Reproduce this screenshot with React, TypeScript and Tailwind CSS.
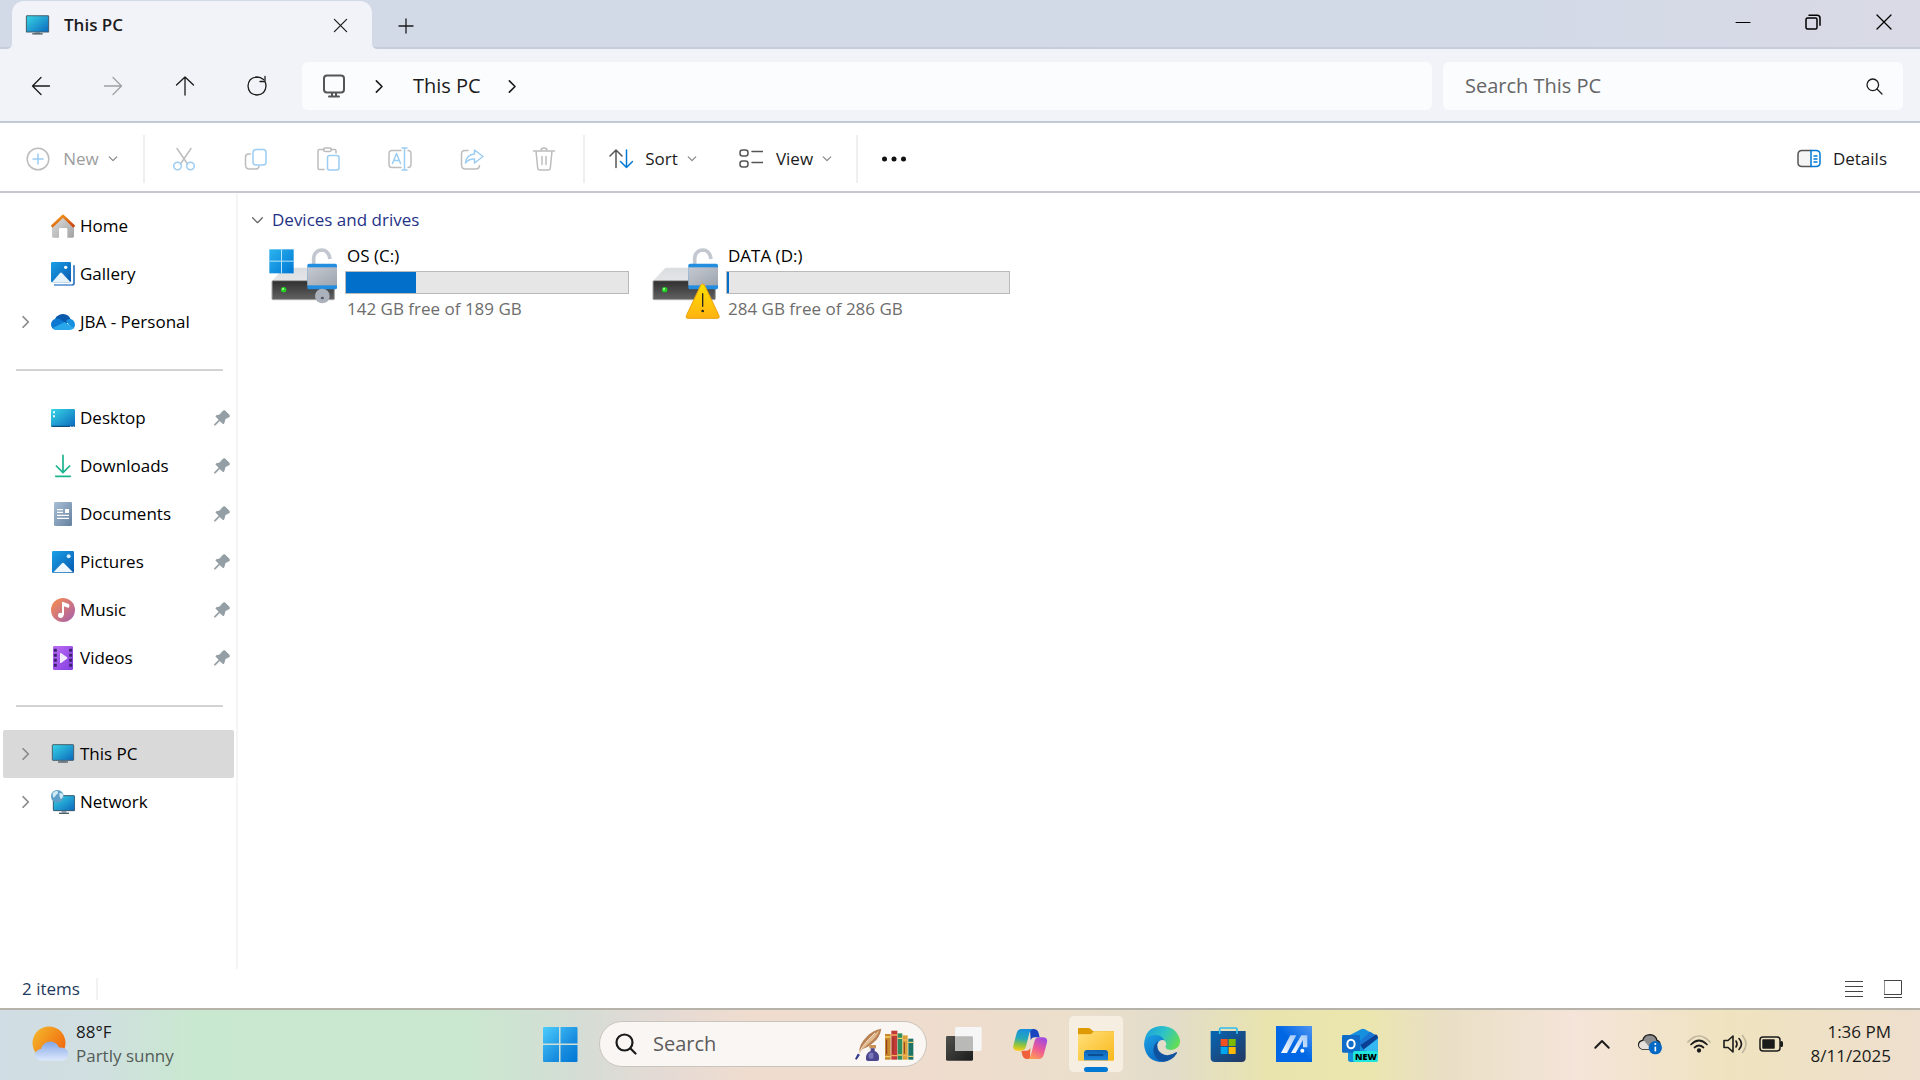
import type { ReactNode } from "react";

interface IconProps {
  className?: string;
}

const GRAY = "#bdbdbd";
const SKY = "#9ccdf2";

function Stroke({ className = "size-6", color = "#1b1b1b", width = 1.5, box = "0 0 24 24", children }: {
  className?: string;
  color?: string;
  width?: number;
  box?: string;
  children: ReactNode;
}) {
  return (
    <svg viewBox={box} className={className} fill="none" stroke={color} strokeWidth={width} strokeLinecap="round" strokeLinejoin="round" aria-hidden="true">
      {children}
    </svg>
  );
}

const Chevron = ({ className = "size-3", color = "#8a8a8a", width = 1.5 }: IconProps & { color?: string; width?: number }) => (
  <Stroke className={className} color={color} width={width} box="0 0 12 12">
    <path d="M1.5 3.5 6 8l4.5-4.5" />
  </Stroke>
);

const PinIcon = () => (
  <svg viewBox="641 645 48 48" className="size-4" aria-hidden="true">
    <path
      d="M667 648q5-4 9 0l11 11q4 5-1 8l-10 5q-2 2-2 6l-2 7q-2 4-5 1l-9-8-12 13q-4 2-5-1 0-2 2-4l12-12-8-8q-3-3 1-5l7-2q4 0 6-4z"
      fill="#939ea5"
    />
  </svg>
);

const MonitorIcon = ({ className = "size-6" }: IconProps) => (
  <svg viewBox="153 637 72 72" className={className} aria-hidden="true">
    <defs>
      <linearGradient id="screen" x1="0" y1="0" x2="1" y2="1">
        <stop offset="0" stopColor="#38d6e6" />
        <stop offset="1" stopColor="#0a68bd" />
      </linearGradient>
    </defs>
    <path d="M182 692h14v6h-14z" fill="#9fb0bb" />
    <path d="M174 697h30" stroke="#4f5d66" strokeWidth="4" />
    <rect x="157" y="645" width="64" height="47" rx="2" fill="url(#screen)" stroke="#46616f" strokeWidth="3" />
  </svg>
);

const HomeIcon = () => (
  <svg viewBox="153 58 72 72" className="size-6" aria-hidden="true">
    <defs>
      <linearGradient id="wall" x1="0" y1="0" x2="1" y2="1">
        <stop offset="0" stopColor="#dedede" />
        <stop offset="1" stopColor="#a2a2a2" />
      </linearGradient>
      <linearGradient id="roof" x1="0" y1="0" x2="1" y2="1">
        <stop offset="0" stopColor="#f9a01b" />
        <stop offset="1" stopColor="#c9400a" />
      </linearGradient>
    </defs>
    <path d="M189 66 156 96v29q0 4 4 4h17v-25q0-4 4-4h17q4 0 4 4v25h16q4 0 4-4V96z" fill="url(#wall)" />
    <path d="m155 96 34-32 34 32" fill="none" stroke="url(#roof)" strokeWidth="8" strokeLinejoin="round" />
  </svg>
);

const PictureDefs = () => (
  <defs>
    <linearGradient id="photo" x1="0" y1="0" x2="1" y2="1">
      <stop offset="0" stopColor="#1ba0e8" />
      <stop offset="1" stopColor="#0759ad" />
    </linearGradient>
  </defs>
);

const GalleryIcon = () => (
  <svg viewBox="153 201 72 72" className="size-6" aria-hidden="true">
    <PictureDefs />
    <path d="M222 211v54q0 5-6 5h-54" fill="none" stroke="#2b74c2" strokeWidth="5" />
    <path d="M216 270h-54" stroke="#8ab2e2" strokeWidth="4" />
    <rect x="153" y="201" width="60" height="61" rx="4" fill="url(#photo)" />
    <path d="m157 261 23-27q3-3 6 0l25 27z" fill="#e6f3fc" />
    <circle cx="197" cy="217" r="5" fill="#fff" />
  </svg>
);

const PicturesIcon = () => (
  <svg viewBox="153 60 72 72" className="size-6" aria-hidden="true">
    <PictureDefs />
    <rect x="156" y="63" width="66" height="66" rx="4" fill="url(#photo)" />
    <path d="m160 127 26-27q3-3 6 0l27 27z" fill="#f0f7fd" />
    <circle cx="206" cy="79" r="6" fill="#d5effc" />
  </svg>
);

const OneDriveIcon = () => (
  <svg viewBox="153 345 72 72" className="size-6" aria-hidden="true">
    <path d="M165 371q9-14 25-14 16 1 22 16l-14 14z" fill="#0a59ab" />
    <path d="M153 388q1-14 14-17 10-1 17 4l22 14-30 16h-8q-15-2-15-17z" fill="#0c78d1" />
    <path d="M198 379q4-8 14-7 12 3 13 17 0 9-6 13z" fill="#1590df" />
    <path d="m158 399 36-18 28 18q-5 6-13 6h-41q-6-1-10-6z" fill="#28a8ea" />
  </svg>
);

const DesktopIcon = () => (
  <svg viewBox="153 633 72 72" className="size-6" aria-hidden="true">
    <rect x="153" y="642" width="72" height="54" rx="4" fill="url(#screen)" />
    <path d="M154 692h70v1q0 3-4 3h-62q-4 0-4-3z" fill="#0b4e7c" />
    <path d="M159 649h6v6h-6zM159 661h6v6h-6zM211 693h3v3h-3zM218 693h3v3h-3z" fill="#eafcff" />
  </svg>
);

const DownloadsIcon = () => (
  <Stroke box="153 779 72 72" color="#19b38d" width={5}>
    <path d="M189 783v50M169 815l20 20 20-20" />
    <path d="M167 846h44" />
  </Stroke>
);

const DocumentsIcon = () => (
  <svg viewBox="153 921 72 72" className="size-6" aria-hidden="true">
    <defs>
      <linearGradient id="paper" x1="0" y1="0" x2="1" y2="1">
        <stop offset="0" stopColor="#a9bfd6" />
        <stop offset="1" stopColor="#64809f" />
      </linearGradient>
    </defs>
    <rect x="162" y="921" width="54" height="72" rx="4" fill="url(#paper)" />
    <path d="M171 944h18M171 952h18M171 961h36M171 970h36" stroke="#fff" strokeWidth="4" />
    <path d="M195 942h12v12h-12z" fill="#fff" />
  </svg>
);

const MusicIcon = () => (
  <svg viewBox="153 204 72 72" className="size-6" aria-hidden="true">
    <defs>
      <linearGradient id="disc" x1="0" y1="0" x2="1" y2="1">
        <stop offset="0.1" stopColor="#f28a55" />
        <stop offset="1" stopColor="#a45db0" />
      </linearGradient>
    </defs>
    <circle cx="189" cy="240" r="36" fill="url(#disc)" />
    <circle cx="182" cy="256" r="8" fill="#fff" />
    <path d="M186 256v-39q1-3 4-1l14 5q4 1 4 5v5q-1 3-4 2l-12-4v27z" fill="#fff" />
  </svg>
);

const VideosIcon = () => (
  <svg viewBox="153 348 72 72" className="size-6" aria-hidden="true">
    <defs>
      <linearGradient id="film" x1="0" y1="0" x2="1" y2="1">
        <stop offset="0" stopColor="#bd6cf4" />
        <stop offset="1" stopColor="#813ee0" />
      </linearGradient>
    </defs>
    <rect x="159" y="348" width="60" height="72" rx="4" fill="url(#film)" />
    <path d="M166 356v60M212 356v60" stroke="#3d2272" strokeWidth="9" strokeDasharray="9 6" />
    <path d="M180 371v27q0 2 3 1l18-13q2-2 0-4l-18-13q-3-1-3 2z" fill="#f2eaff" />
  </svg>
);

const NetworkIcon = () => (
  <svg viewBox="153 780 72 72" className="size-6" aria-hidden="true">
    <path d="M185 843h14v6h-14z" fill="#9fb0bb" />
    <path d="M177 850h30" stroke="#4f5d66" strokeWidth="4" />
    <rect x="160" y="797" width="64" height="45" rx="2" fill="url(#screen)" stroke="#34596d" strokeWidth="3" />
    <circle cx="172" cy="799" r="19" fill="#5d9fc6" />
    <path d="M158 790q8-10 16-6 2 8-6 11-3 9-9 7zM178 790q9-3 12 6-1 9-8 11-5-8-4-17z" fill="#cfe9f5" />
  </svg>
);

const ScissorsIcon = () => (
  <Stroke color={GRAY}>
    <path d="M5 1.500 15.500 17M19 1.500 8.500 17" />
    <g stroke={SKY}>
      <circle cx="5.500" cy="19" r="3.800" />
      <circle cx="18.500" cy="19" r="3.800" />
    </g>
  </Stroke>
);

const CopyIcon = () => (
  <Stroke color={GRAY}>
    <path d="M6.500 7H4.500Q1.500 7 1.500 10v8q0 4 4 4h6q3 0 3.500-2.500" />
    <rect x="9" y="2.500" width="13" height="15.500" rx="3" stroke={SKY} />
  </Stroke>
);

const PasteIcon = () => (
  <Stroke color={GRAY}>
    <path d="M8 2.500H3.500Q2 2.500 2 4v17q0 1.500 1.500 1.500H8M15 2.500h3.500Q20 2.500 20 4v2" />
    <rect x="7.500" y="1" width="8" height="3.500" rx="1.700" />
    <rect x="11.500" y="8.500" width="11.500" height="14.500" rx="2" stroke={SKY} />
  </Stroke>
);

const RenameIcon = () => (
  <Stroke color={GRAY}>
    <path d="M13 3.500H4Q1 3.500 1 7v10q0 3.500 3 3.500h9M20 3.500q3 0 3 3.500v10q0 3.500-3 3.500" />
    <path d="m4.500 16.500 4-10 4 10M6 13.500h5M16.500 1.500v21M14 1h5M14 23h5" stroke={SKY} />
  </Stroke>
);

const ShareIcon = () => (
  <Stroke color={GRAY}>
    <path d="M8 3.500H5Q1.500 3.500 1.500 7v11q0 4 4 4h10q4 0 4-3.500" />
    <path d="M14.500 3 23 9.500 14.500 16v-4Q9 11.500 5.500 16 6.500 7.500 14.500 7z" stroke={SKY} />
  </Stroke>
);

const TrashIcon = () => (
  <Stroke color={GRAY}>
    <path d="M1.500 4h21M4 4l1.700 17q.3 2 2.300 2h8q2 0 2.300-2L20 4M9 3.500Q9 1 12 1t3 2.500M10 9.500v8M14 9.500v8" />
  </Stroke>
);

const EDIT_ACTIONS = [
  { label: "Cut", icon: ScissorsIcon },
  { label: "Copy", icon: CopyIcon },
  { label: "Paste", icon: PasteIcon },
  { label: "Rename", icon: RenameIcon },
  { label: "Share", icon: ShareIcon },
  { label: "Delete", icon: TrashIcon },
];

const DriveIcon = ({ windows, warning }: { windows?: boolean; warning?: boolean }) => (
  <svg viewBox="84 140 213 219" className="mt-[3px] h-[73px] w-[71px] shrink-0" aria-hidden="true">
    <defs>
      <linearGradient id="driveTop" x1="0" y1="0" x2="0" y2="1">
        <stop offset="0" stopColor="#dcdde0" />
        <stop offset="1" stopColor="#e4e5e7" />
      </linearGradient>
      <linearGradient id="driveFront" x1="0" y1="0" x2="0" y2="1">
        <stop offset="0" stopColor="#2f2f2f" />
        <stop offset="1" stopColor="#636363" />
      </linearGradient>
      <linearGradient id="lock" x1="0" y1="0" x2="1" y2="1">
        <stop offset="0" stopColor="#c5c9d1" />
        <stop offset="1" stopColor="#9ea5af" />
      </linearGradient>
      <linearGradient id="winTile" x1="0" y1="0" x2="1" y2="1">
        <stop offset="0" stopColor="#2bb3ee" />
        <stop offset="1" stopColor="#0078d4" />
      </linearGradient>
      <linearGradient id="warn" x1="0" y1="0" x2="0" y2="1">
        <stop offset="0" stopColor="#ffe000" />
        <stop offset="1" stopColor="#ffb211" />
      </linearGradient>
    </defs>
    <path d="M96 241 132 204q2-2 5-2h108q3 0 5 2l34 37z" fill="url(#driveTop)" />
    <rect x="96" y="241" width="187" height="57" rx="3" fill="url(#driveFront)" stroke="#a5a5a5" strokeWidth="3" />
    <circle cx="131" cy="268" r="8" fill="#24d321" />
    <circle cx="129" cy="266" r="3" fill="#b2ffa0" />
    {windows && (
      <>
        <rect x="88" y="147" width="73" height="72" fill="url(#winTile)" />
        <path d="M124.500 147v72M88 182.500h73" stroke="#b9e3fa" strokeWidth="3" />
      </>
    )}
    <path d="M221 192v-18q2-24 25-25 20 1 24 27" fill="none" stroke="#c3c8d0" strokeWidth="11" />
    <rect x="202" y="190" width="89" height="77" rx="5" fill="#238de0" />
    <path d="M202 201h89v54h-89z" fill="url(#lock)" />
    {windows && (
      <>
        <circle cx="247" cy="287" r="22" fill="#aab1ba" />
        <ellipse cx="247" cy="293" rx="5" ry="4" fill="#555c65" />
      </>
    )}
    {warning && (
      <>
        <path d="M239 255q6-8 12 0l43 91q3 8-5 8h-88q-8 0-5-8z" fill="url(#warn)" stroke="#eaa20c" strokeWidth="3" />
        <path d="M245 280v38" stroke="#222" strokeWidth="4" strokeLinecap="round" />
        <circle cx="245" cy="332" r="4" fill="#222" />
      </>
    )}
  </svg>
);

const StartIcon = () => (
  <svg viewBox="0 0 36 36" className="size-9" aria-hidden="true">
    <defs>
      <linearGradient id="start" x1="0" y1="0" x2="1" y2="1">
        <stop offset="0" stopColor="#4ccdfd" />
        <stop offset="0.6" stopColor="#1a8fe0" />
        <stop offset="1" stopColor="#0078d4" />
      </linearGradient>
    </defs>
    <path d="M1 2q0-1 1-1h15v16.500H1zM18.500 1h16q1 0 1 1v15.500h-17zM1 19h16v17H2q-1 0-1-1zM18.500 19h17v16q0 1-1 1h-16z" fill="url(#start)" />
  </svg>
);

const TaskViewIcon = () => (
  <svg viewBox="48 63 108 108" className="size-9" aria-hidden="true">
    <defs>
      <linearGradient id="pane" x1="0" y1="0" x2="1" y2="1">
        <stop offset="0" stopColor="#50504e" />
        <stop offset="1" stopColor="#1b1b1b" />
      </linearGradient>
    </defs>
    <rect x="48" y="93" width="81" height="74" rx="4" fill="url(#pane)" />
    <rect x="75" y="66" width="80" height="72" rx="4" fill="#f6f6f6" />
    <path d="M75 94h50q4 0 4 4v40H79q-4 0-4-4z" fill="#b9b9b8" />
  </svg>
);

const CopilotIcon = () => (
  <svg viewBox="246 63 108 108" className="size-9" aria-hidden="true">
    <defs>
      <linearGradient id="cpA" x1="0.5" y1="0" x2="0.4" y2="1">
        <stop offset="0" stopColor="#168ee0" />
        <stop offset="0.45" stopColor="#28a9b5" />
        <stop offset="0.75" stopColor="#93c43b" />
        <stop offset="1" stopColor="#f6cd1c" />
      </linearGradient>
      <linearGradient id="cpB" x1="0.7" y1="0" x2="0.2" y2="1">
        <stop offset="0" stopColor="#a14be0" />
        <stop offset="0.5" stopColor="#ee5a94" />
        <stop offset="1" stopColor="#ffa04f" />
      </linearGradient>
    </defs>
    <path d="M300 72h13q10 1 13 13l3 12h-15q-9 0-12 9z" fill="#1a45bf" />
    <path d="M300 162h-11q-9-1-12-12l-3-13h15q9 0 12-9z" fill="#f0603a" />
    <path d="M274 72h34q-8 3-10 13l-10 39q-3 13-15 13h-12q-14-2-11-15l10-38q4-12 14-12z" fill="url(#cpA)" />
    <path d="M327 162h-34q8-3 10-13l10-39q3-13 15-13h12q14 2 11 15l-10 38q-4 12-14 12z" fill="url(#cpB)" />
  </svg>
);

const ExplorerIcon = () => (
  <svg viewBox="444 63 108 108" className="size-9" aria-hidden="true">
    <defs>
      <linearGradient id="folder" x1="0" y1="0" x2="1" y2="1">
        <stop offset="0" stopColor="#ffe07a" />
        <stop offset="1" stopColor="#fab81c" />
      </linearGradient>
      <linearGradient id="tray" x1="0" y1="0" x2="0" y2="1">
        <stop offset="0" stopColor="#0e62b3" />
        <stop offset="1" stopColor="#1b86dd" />
      </linearGradient>
    </defs>
    <path d="M444 72q0-3 3-3h29q3 0 5 2l9 8h62v10H444z" fill="#dd9a02" />
    <path d="M444 88h36q4 0 6-3l6-6h60v85q0 3-3 3H447q-3 0-3-3z" fill="url(#folder)" />
    <path d="M462 166v-22q0-9 9-9h54q9 0 9 9v22z" fill="url(#tray)" />
    <path d="M476 150h42" stroke="#0a417f" strokeWidth="4" strokeLinecap="round" />
  </svg>
);

const EdgeIcon = () => (
  <svg viewBox="642 63 108 108" className="size-9" aria-hidden="true">
    <defs>
      <linearGradient id="edgeTop" x1="0" y1="0.2" x2="1" y2="0.6">
        <stop offset="0" stopColor="#1b9fdc" />
        <stop offset="0.5" stopColor="#2dc3c8" />
        <stop offset="1" stopColor="#64dd55" />
      </linearGradient>
      <linearGradient id="edgeLeft" x1="0" y1="0" x2="0.6" y2="1">
        <stop offset="0" stopColor="#1ea1e4" />
        <stop offset="1" stopColor="#0868c2" />
      </linearGradient>
    </defs>
    <path d="M643 110q5-43 50-47 46 0 57 42 2 26-25 30-20 0-18-11 5-10-3-17-10-10-30-6-20 5-31 9z" fill="url(#edgeTop)" />
    <path d="M642 118q2-25 30-28 24 0 31 16-15-4-21 12-3 30 30 46-10 7-22 7-44-5-48-53z" fill="url(#edgeLeft)" />
    <path d="M684 108q-9 22 10 37 20 13 44-3 5-2 3 3-14 23-41 26-29-8-30-35 1-19 14-28z" fill="#10529f" />
  </svg>
);

const StoreIcon = () => (
  <svg viewBox="838 63 108 108" className="size-9" aria-hidden="true">
    <defs>
      <linearGradient id="bag" x1="0" y1="0" x2="1" y2="1">
        <stop offset="0" stopColor="#0766b5" />
        <stop offset="1" stopColor="#243860" />
      </linearGradient>
    </defs>
    <path d="M840 78h105v80q0 13-13 13h-79q-13 0-13-13z" fill="url(#bag)" />
    <path d="M867 87V72q0-3 3-3h46q3 0 3 3v15" fill="none" stroke="#32bbec" strokeWidth="5" />
    <path d="M870 102h21v21h-21z" fill="#f25022" />
    <path d="M894 102h21v21h-21z" fill="#7fba00" />
    <path d="M870 126h21v21h-21z" fill="#00a4ef" />
    <path d="M894 126h21v21h-21z" fill="#ffb900" />
  </svg>
);

const MyAsusIcon = () => (
  <svg viewBox="1038 63 108 108" className="size-9" aria-hidden="true">
    <defs>
      <linearGradient id="asus" x1="0.5" y1="0.5" x2="1" y2="0">
        <stop offset="0" stopColor="#0067e4" />
        <stop offset="1" stopColor="#4f94f1" />
      </linearGradient>
      <linearGradient id="asusBar" x1="0" y1="1" x2="1" y2="0">
        <stop offset="0" stopColor="#fff" />
        <stop offset="1" stopColor="#9fc7f8" />
      </linearGradient>
    </defs>
    <path d="M1038 63h108v108h-108z" fill="url(#asus)" />
    <path d="m1053 144 28-53h18l-28 53z" fill="url(#asusBar)" />
    <path d="m1083 144 31-53h18v36h-13v-22l-22 39z" fill="url(#asusBar)" />
    <circle cx="1117" cy="137" r="6" fill="#fff" />
  </svg>
);

const OutlookIcon = () => (
  <span className="relative size-9">
    <svg viewBox="1236 63 108 108" className="size-9" aria-hidden="true">
      <path d="m1256 92 37-19q6-3 12 0l35 20q4 3 4 8v62q0 8-8 8h-74q-8 0-8-8v-62q0-6 2-9z" fill="#1490df" />
      <path d="m1290 119 48-31q6 4 6 11l-43 35z" fill="#0b3f94" />
      <path d="m1290 108 30-28 16 10-46 31z" fill="#1976d2" />
      <path d="m1300 134 44-33v50z" fill="#35b8f1" />
      <rect x="1236" y="90" width="54" height="53" rx="4" fill="#0f6cc9" />
      <ellipse cx="1263" cy="117" rx="11" ry="13" fill="none" stroke="#fff" strokeWidth="6" />
      <rect x="1269" y="138" width="75" height="33" rx="6" fill="#1fe5dc" />
    </svg>
    <span className="absolute bottom-0 -right-px w-[26px] text-center text-[9px] leading-[11px] font-extrabold text-black">NEW</span>
  </span>
);

const BooksArt = () => (
  <svg viewBox="974 66 180 105" className="h-[35px] w-[60px] shrink-0" aria-hidden="true">
    <path d="M990 145q-4-24 22-50 18-20 44-24-4 26-24 42-16 14-34 20z" fill="#b88255" />
    <path d="M996 136q14-32 54-60-8 22-30 38z" fill="#e3bb90" />
    <path d="M983 158q10-34 54-74" fill="none" stroke="#f6e3cd" strokeWidth="3" />
    <path d="m977 162 8-16 7 3-10 15z" fill="#333a8f" />
    <path d="M1020 120h20v10h-20z" fill="#c99159" />
    <path d="M1024 130h12v8q13 6 13 17v8q0 5-6 5h-27q-6 0-6-5v-8q1-11 14-17z" fill="#4c478f" />
    <path d="M1018 148q6-9 14-4v16q-14 3-14-4z" fill="#7b77bd" />
    <path d="M1067 87h17v77h-17z" fill="#c8882e" />
    <path d="M1086 77h18v87h-18z" fill="#c23b36" />
    <path d="M1105 85h14v79h-14z" fill="#2f8f5d" />
    <path d="M1120 91h15v73h-15z" fill="#dba136" />
    <path d="M1137 101h15v63h-15z" fill="#1d7466" />
    <path d="M1067 96h17M1067 155h17M1105 100h14M1105 150h14M1137 112h15M1137 154h15" stroke="#f0cf6a" strokeWidth="4" />
    <path d="M1086 90h18M1086 152h18M1120 105h15M1120 152h15" stroke="#f5b25c" strokeWidth="4" />
    <path d="M1072 104v44M1091 97v48M1125 112v34" stroke="#8d3321" strokeWidth="3" />
  </svg>
);

const WeatherIcon = () => (
  <svg viewBox="0 0 36 36" className="size-9 shrink-0" aria-hidden="true">
    <defs>
      <linearGradient id="sun" x1="0" y1="0.1" x2="1" y2="0.8">
        <stop offset="0" stopColor="#f3b82c" />
        <stop offset="1" stopColor="#f2640c" />
      </linearGradient>
      <linearGradient id="cloud" x1="0" y1="0" x2="0" y2="1">
        <stop offset="0" stopColor="#83a6e6" />
        <stop offset="1" stopColor="#dde8fc" />
      </linearGradient>
    </defs>
    <circle cx="17" cy="17" r="16.500" fill="url(#sun)" />
    <path d="M9 34.500q-6-.5-6-6 1-5 6-5.500 2-7 9-7.500 7 .5 9 6 8-.5 9.500 6 0 6.500-6.500 7z" fill="url(#cloud)" />
  </svg>
);

interface NavItem {
  label: string;
  icon: () => ReactNode;
  expandable?: boolean;
  pinned?: boolean;
  selected?: boolean;
}

const NAV_GROUPS: NavItem[][] = [
  [
    { label: "Home", icon: HomeIcon },
    { label: "Gallery", icon: GalleryIcon },
    { label: "JBA - Personal", icon: OneDriveIcon, expandable: true },
  ],
  [
    { label: "Desktop", icon: DesktopIcon, pinned: true },
    { label: "Downloads", icon: DownloadsIcon, pinned: true },
    { label: "Documents", icon: DocumentsIcon, pinned: true },
    { label: "Pictures", icon: PicturesIcon, pinned: true },
    { label: "Music", icon: MusicIcon, pinned: true },
    { label: "Videos", icon: VideosIcon, pinned: true },
  ],
  [
    { label: "This PC", icon: MonitorIcon, expandable: true, selected: true },
    { label: "Network", icon: NetworkIcon, expandable: true },
  ],
];

const DRIVES = [
  { name: "OS (C:)", free: 142, total: 189, windows: true, warning: false },
  { name: "DATA (D:)", free: 284, total: 286, windows: false, warning: true },
];

const APPS = [
  { label: "Task View", icon: TaskViewIcon },
  { label: "Copilot", icon: CopilotIcon },
  { label: "File Explorer", icon: ExplorerIcon, active: true },
  { label: "Microsoft Edge", icon: EdgeIcon },
  { label: "Microsoft Store", icon: StoreIcon },
  { label: "MyASUS", icon: MyAsusIcon },
  { label: "Outlook", icon: OutlookIcon },
];

const TabFlare = ({ className }: { className: string }) => (
  <svg viewBox="0 0 6 6" className={className} aria-hidden="true">
    <path d="M6 0v6H0q6 0 6-6z" fill="#f2f3f8" />
  </svg>
);

function TitleBar() {
  return (
    <header className="flex h-[49px] border-b-2 border-[#c6ccda] bg-linear-to-r from-[#d3dae7] from-80% to-[#d9dae5]">
      <div className="relative mt-px -mb-0.5 ml-3 flex w-[360px] items-center rounded-t-xl bg-[#f2f3f8] pr-4 pl-[13px]">
        <TabFlare className="absolute bottom-0 -left-1.5 size-1.5" />
        <TabFlare className="absolute -right-1.5 bottom-0 size-1.5 -scale-x-100" />
        <MonitorIcon className="size-[25px]" />
        <span className="ml-[14px] text-[17px] font-semibold">This PC</span>
        <button type="button" aria-label="Close tab" className="ml-auto flex size-8 items-center justify-center">
          <Stroke className="size-[15px]" box="0 0 16 16" width={1.3}>
            <path d="m1.500 1.500 13 13M14.500 1.500l-13 13" />
          </Stroke>
        </button>
      </div>
      <button type="button" aria-label="New tab" className="ml-4 flex w-9 items-center justify-center">
        <Stroke className="mt-1 size-4" box="0 0 16 16" width={1.3}>
          <path d="M8 1v14M1 8h14" />
        </Stroke>
      </button>
      <div className="ml-auto flex h-[43px]">
        <button type="button" aria-label="Minimize" className="flex w-[70px] items-center justify-center">
          <Stroke className="size-4" box="0 0 16 16" color="#000" width={1}>
            <path d="M1 8.500h14" />
          </Stroke>
        </button>
        <button type="button" aria-label="Restore" className="flex w-[70px] items-center justify-center">
          <Stroke className="size-4" box="0 0 16 16" color="#000">
            <rect x="1" y="4" width="11" height="11" rx="1.500" />
            <path d="M4 1.200h8q3 0 3 3v7" />
          </Stroke>
        </button>
        <button type="button" aria-label="Close" className="flex w-[72px] items-center justify-center">
          <Stroke className="size-4" box="0 0 16 16" color="#000" width={1.3}>
            <path d="m1 1 14 14M15 1 1 15" />
          </Stroke>
        </button>
      </div>
    </header>
  );
}

const NAV_BUTTONS = [
  { label: "Back", path: "M11 2.500 2.500 11l8.500 8.500M2.500 11h17", color: "#1b1b1b" },
  { label: "Forward", path: "m11 2.500 8.500 8.500-8.500 8.500M19.500 11h-17", color: "#a0a0a3" },
  { label: "Up", path: "M2.500 10 11 2l8.500 8M11 2v18", color: "#1b1b1b" },
  { label: "Refresh", path: "M17.500 4.500Q14.500 2 11 2 2.500 2.500 2 11q.5 8.500 9 9 8.500-.5 9-9 0-2-1-4.500M19 1.500v5h-5", color: "#1b1b1b" },
];

function AddressRow() {
  return (
    <div className="flex h-[74px] items-center border-b-2 border-[#c3c8d5] bg-[#f2f3f8] px-[17px] pt-0.5">
      <nav className="flex gap-6">
        {NAV_BUTTONS.map((b) => (
          <button key={b.label} type="button" aria-label={b.label} disabled={b.label === "Forward"} className="flex size-12 items-center justify-center">
            <Stroke className="size-[22px]" box="0 0 22 22" color={b.color} width={1.3}>
              <path d={b.path} />
            </Stroke>
          </button>
        ))}
      </nav>
      <div className="ml-[21px] flex h-12 flex-1 items-center rounded-md bg-[#fbfcfe] pl-5">
        <Stroke color="#555" width={2}>
          <rect x="2" y="1.500" width="20" height="17" rx="3" />
          <path d="M10 19v3M14 19v3M7 22.500h10" />
        </Stroke>
        <Chevron className="ml-[26px] size-[15px] -rotate-90" color="#1b1b1b" width={1.3} />
        <button type="button" className="ml-[26px] text-xl">This PC</button>
        <Chevron className="ml-6 size-[15px] -rotate-90" color="#1b1b1b" width={1.3} />
      </div>
      <label className="ml-[11px] flex h-12 w-[460px] items-center rounded-md bg-[#fbfcfe] pr-5 pl-[22px]">
        <input type="text" aria-label="Search This PC" placeholder="Search This PC" className="min-w-0 flex-1 text-xl outline-none placeholder:text-[#666]" />
        <Stroke className="size-[17px]" box="0 0 17 17" width={1.3}>
          <circle cx="6.800" cy="6.800" r="5.800" />
          <path d="m11 11 5 5" />
        </Stroke>
      </label>
    </div>
  );
}

const Separator = () => <span className="h-12 w-0.5 bg-[#efefef]" />;

function Toolbar() {
  return (
    <div className="flex h-[70px] items-center border-b-2 border-[#c6c9d4] bg-white pt-1 pr-[33px] pl-[26px] text-[17px]">
      <button type="button" disabled className="flex items-center text-[#9d9d9d]">
        <Stroke color={GRAY}>
          <circle cx="12" cy="12" r="10.800" />
          <path d="M12 7v10M7 12h10" stroke={SKY} />
        </Stroke>
        <span className="ml-[13px] w-[36px]">New</span>
        <Chevron className="ml-[9px] size-[10px]" />
      </button>
      <span className="ml-[25px]" />
      <Separator />
      <div className="mx-[27px] flex gap-12">
        {EDIT_ACTIONS.map((a) => (
          <button key={a.label} type="button" aria-label={a.label} disabled>
            <a.icon />
          </button>
        ))}
      </div>
      <Separator />
      <button type="button" className="ml-6 flex items-center">
        <Stroke color="#555">
          <path d="M7 20.500V3M1 9l6-6 6 6" />
          <path d="M17.500 3v17.500M11.500 14.500l6 6 6-6" stroke="#0078d4" />
        </Stroke>
        <span className="ml-3 w-[33px]">Sort</span>
        <Chevron className="ml-[9px] size-[10px]" />
      </button>
      <button type="button" className="ml-[42px] flex items-center">
        <Stroke color="#555">
          <rect x="1" y="3" width="8" height="6" rx="2.500" />
          <rect x="1" y="14" width="8" height="6" rx="2.500" />
          <path d="M13 4.500h11M13 15.500h11" />
        </Stroke>
        <span className="ml-3 w-[39px]">View</span>
        <Chevron className="ml-2 size-[10px]" />
      </button>
      <span className="ml-6" />
      <Separator />
      <button type="button" aria-label="See more" className="ml-6">
        <svg viewBox="0 0 24 24" className="size-6" fill="#111" aria-hidden="true">
          <circle cx="2.500" cy="12" r="2.500" />
          <circle cx="12" cy="12" r="2.500" />
          <circle cx="21.500" cy="12" r="2.500" />
        </svg>
      </button>
      <button type="button" className="ml-auto flex items-center gap-3">
        <Stroke color="#555">
          <path d="M14 3.500H5q-4 0-4 4v8q0 4 4 4h9" fill="#f5f5f5" />
          <path d="M14 3.500h5q4 0 4 4v8q0 4-4 4h-5zM17 9h3M17 12h3M17 15h3" stroke="#0078d4" />
        </Stroke>
        Details
      </button>
    </div>
  );
}

function Sidebar() {
  return (
    <nav className="flex w-[238px] shrink-0 flex-col border-r-2 border-[#f5f5f5] pt-[9px] text-[17px] text-black">
      {NAV_GROUPS.map((group, i) => (
        <div key={group[0].label}>
          {i > 0 && (
            <div className="flex h-12 items-center pr-[13px] pl-4">
              <hr className="w-full border-t-2 border-[#d3d3d3]" />
            </div>
          )}
          {group.map((item) => (
            <a
              key={item.label}
              href="#"
              className={
                item.selected
                  ? "mr-0.5 ml-[3px] flex h-12 items-center rounded-xs bg-[#d9d9d9] pr-1 pl-4"
                  : "mr-0.5 ml-[3px] flex h-12 items-center pr-1 pl-4"
              }
            >
              <span className="w-8">{item.expandable && <Chevron className="size-[14px] -rotate-90" />}</span>
              <item.icon />
              <span className="ml-[5px] flex-1 whitespace-nowrap">{item.label}</span>
              {item.pinned && <PinIcon />}
            </a>
          ))}
        </div>
      ))}
    </nav>
  );
}

function Content() {
  return (
    <main className="flex-1 pt-[15px] pl-[13px] text-[17px] leading-6">
      <h2>
        <button type="button" className="flex items-center gap-2 text-[#1f3286]">
          <Chevron className="size-[13px]" color="#666" width={1.2} />
          Devices and drives
        </button>
      </h2>
      <div className="mt-3 flex gap-5 pl-[17px]">
        {DRIVES.map((d) => (
          <div key={d.name} className="flex w-[361px] gap-1.5">
            <DriveIcon windows={d.windows} warning={d.warning} />
            <div className="flex-1">
              <p className="pl-0.5 text-black">{d.name}</p>
              <div className="mt-[3px] h-[23px] border border-[#b9b9b9] bg-[#e6e6e6]">
                <div
                  className="h-full bg-[#026fca]"
                  style={{ width: `${(1 - d.free / d.total) * 100}%` }}
                />
              </div>
              <p className="mt-[3px] pl-0.5 text-[#6d6d6d]">{d.free} GB free of {d.total} GB</p>
            </div>
          </div>
        ))}
      </div>
    </main>
  );
}

function StatusBar() {
  return (
    <footer className="flex h-[39px] items-center pr-[18px] pl-[22px] text-[17px] text-[#1e395b]">
      <span>2 items</span>
      <span className="ml-4 h-[22px] w-0.5 bg-[#f2f2f2]" />
      <button type="button" aria-label="Details view" className="ml-auto">
        <Stroke className="size-[18px]" box="0 0 18 18" color="#444" width={1}>
          <path d="M0 1.500h18M0 6.500h18M0 11.500h18M0 16.500h18" />
        </Stroke>
      </button>
      <button type="button" aria-label="Large icons view" className="ml-[21px]">
        <Stroke className="size-[18px]" box="0 0 18 18" color="#444" width={1}>
          <path d="M.5.500h17v14H.500zM0 17.500h18" />
        </Stroke>
      </button>
    </footer>
  );
}

function Taskbar() {
  return (
    <div className="grid h-[72px] grid-cols-[1fr_auto_1fr] items-center border-t-2 border-[#b5b3aa] bg-[linear-gradient(90deg,#d0dde4_0%,#d0dfe0_5%,#c9e8d0_10%,#c9e8cf_24%,#d4ddd5_30%,#e3dad5_34%,#efdccf_39%,#eedccd_50%,#ebdfcb_56%,#e2dcca_61%,#e9e4ae_66%,#ebe6ad_71%,#e9dfc4_75%,#f4e4d9_82%,#efe3bf_90%,#eedfce_100%)] pb-0.5">
      <button type="button" className="flex items-center gap-2 pl-8 text-left text-[17px] leading-6">
        <WeatherIcon />
        <span>
          <span className="block">88°F</span>
          <span className="block text-[#555c58]">Partly sunny</span>
        </span>
      </button>
      <div className="flex items-center">
        <button type="button" aria-label="Start" className="flex w-14 justify-center">
          <StartIcon />
        </button>
        <label className="mr-[9px] ml-[11px] flex h-[46px] w-[328px] items-center rounded-full border border-[#c9c4bd] bg-[#faf6f3] pr-3 pl-[15px]">
          <Stroke className="size-[22px]" box="0 0 22 22" width={2.2}>
            <circle cx="9.500" cy="9.500" r="8" />
            <path d="m15.500 15.500 5 5" />
          </Stroke>
          <input type="text" aria-label="Search" placeholder="Search" className="ml-4 min-w-0 flex-1 text-xl outline-none placeholder:text-[#5c5c5c]" />
          <BooksArt />
        </label>
        <div className="flex gap-2.5">
          {APPS.map((app) => (
            <button
              key={app.label}
              type="button"
              aria-label={app.label}
              className={
                app.active
                  ? "relative flex h-[58px] w-14 items-center justify-center rounded-md border border-[#e8dfcf] bg-[#f6eee0]"
                  : "flex h-[58px] w-14 items-center justify-center"
              }
            >
              <app.icon />
              {app.active && <span className="absolute bottom-0 h-[5px] w-6 rounded-full bg-[#0078d4]" />}
            </button>
          ))}
        </div>
      </div>
      <div className="flex items-center justify-end pr-[29px]">
        <button type="button" aria-label="Show hidden icons" className="mr-[27px]">
          <Chevron className="size-[18px] rotate-180" color="#1b1b1b" width={1.3} />
        </button>
        <svg viewBox="237 225 75 66" className="mr-6 h-[22px] w-[25px]" aria-label="OneDrive">
          <path d="M250 273q-12-3-11-15 2-10 12-11 5-17 22-17 17 1 21 17 9 3 9 12-1 14-13 14z" fill="#8e8e8e" stroke="#1b1b1b" strokeWidth="4" />
          <path d="M252 273q-12-1-12-13 3-11 16-11l20 24z" fill="#e5e1da" />
          <circle cx="289" cy="269" r="20" fill="#0568c4" />
          <path d="M289 266v14" stroke="#fff" strokeWidth="5" />
          <circle cx="289" cy="258" r="3" fill="#fff" />
        </svg>
        <button type="button" aria-label="Network, volume and battery" className="mr-4 flex items-center gap-3">
          <Stroke className="h-[18px] w-6" box="0 0 24 18" color="#1b1b1b" width={1.7}>
            <path d="M1 7Q12-5 23 7" stroke="#bfb59c" />
            <path d="M4 9.500q8-8 16 0M7.500 12.500q4.500-4 9 0" />
            <circle cx="12" cy="15.500" r="1.300" fill="#1b1b1b" />
          </Stroke>
          <Stroke className="h-5 w-6" box="0 0 24 20" color="#1b1b1b" width={1.6}>
            <path d="M1 6.500h4L10 2v16l-5-4.500H1zM13 7q2 3 0 6M16 4.500q5 5.500 0 11" />
            <path d="M19.500 1.500q7 8.500 0 17" stroke="#bfb59c" />
          </Stroke>
          <Stroke className="h-4 w-6" box="0 0 24 16" color="#1b1b1b" width={1.5}>
            <rect x="1" y="1" width="20" height="14" rx="3" />
            <path d="M4 4h11v8H4z" fill="#1b1b1b" />
            <path d="M22.500 6.500v3" strokeWidth={3} />
          </Stroke>
        </button>
        <button type="button" className="w-[92px] text-right text-[17px] leading-6 whitespace-nowrap">
          <span className="block">1:36 PM</span>
          <span className="block">8/11/2025</span>
        </button>
      </div>
    </div>
  );
}

export default function App() {
  return (
    <div className="flex min-h-screen flex-col bg-white font-['Open_Sans','Noto_Sans',sans-serif] text-[#1b1b1b]">
      <TitleBar />
      <AddressRow />
      <Toolbar />
      <div className="flex flex-1">
        <Sidebar />
        <Content />
      </div>
      <StatusBar />
      <Taskbar />
    </div>
  );
}
